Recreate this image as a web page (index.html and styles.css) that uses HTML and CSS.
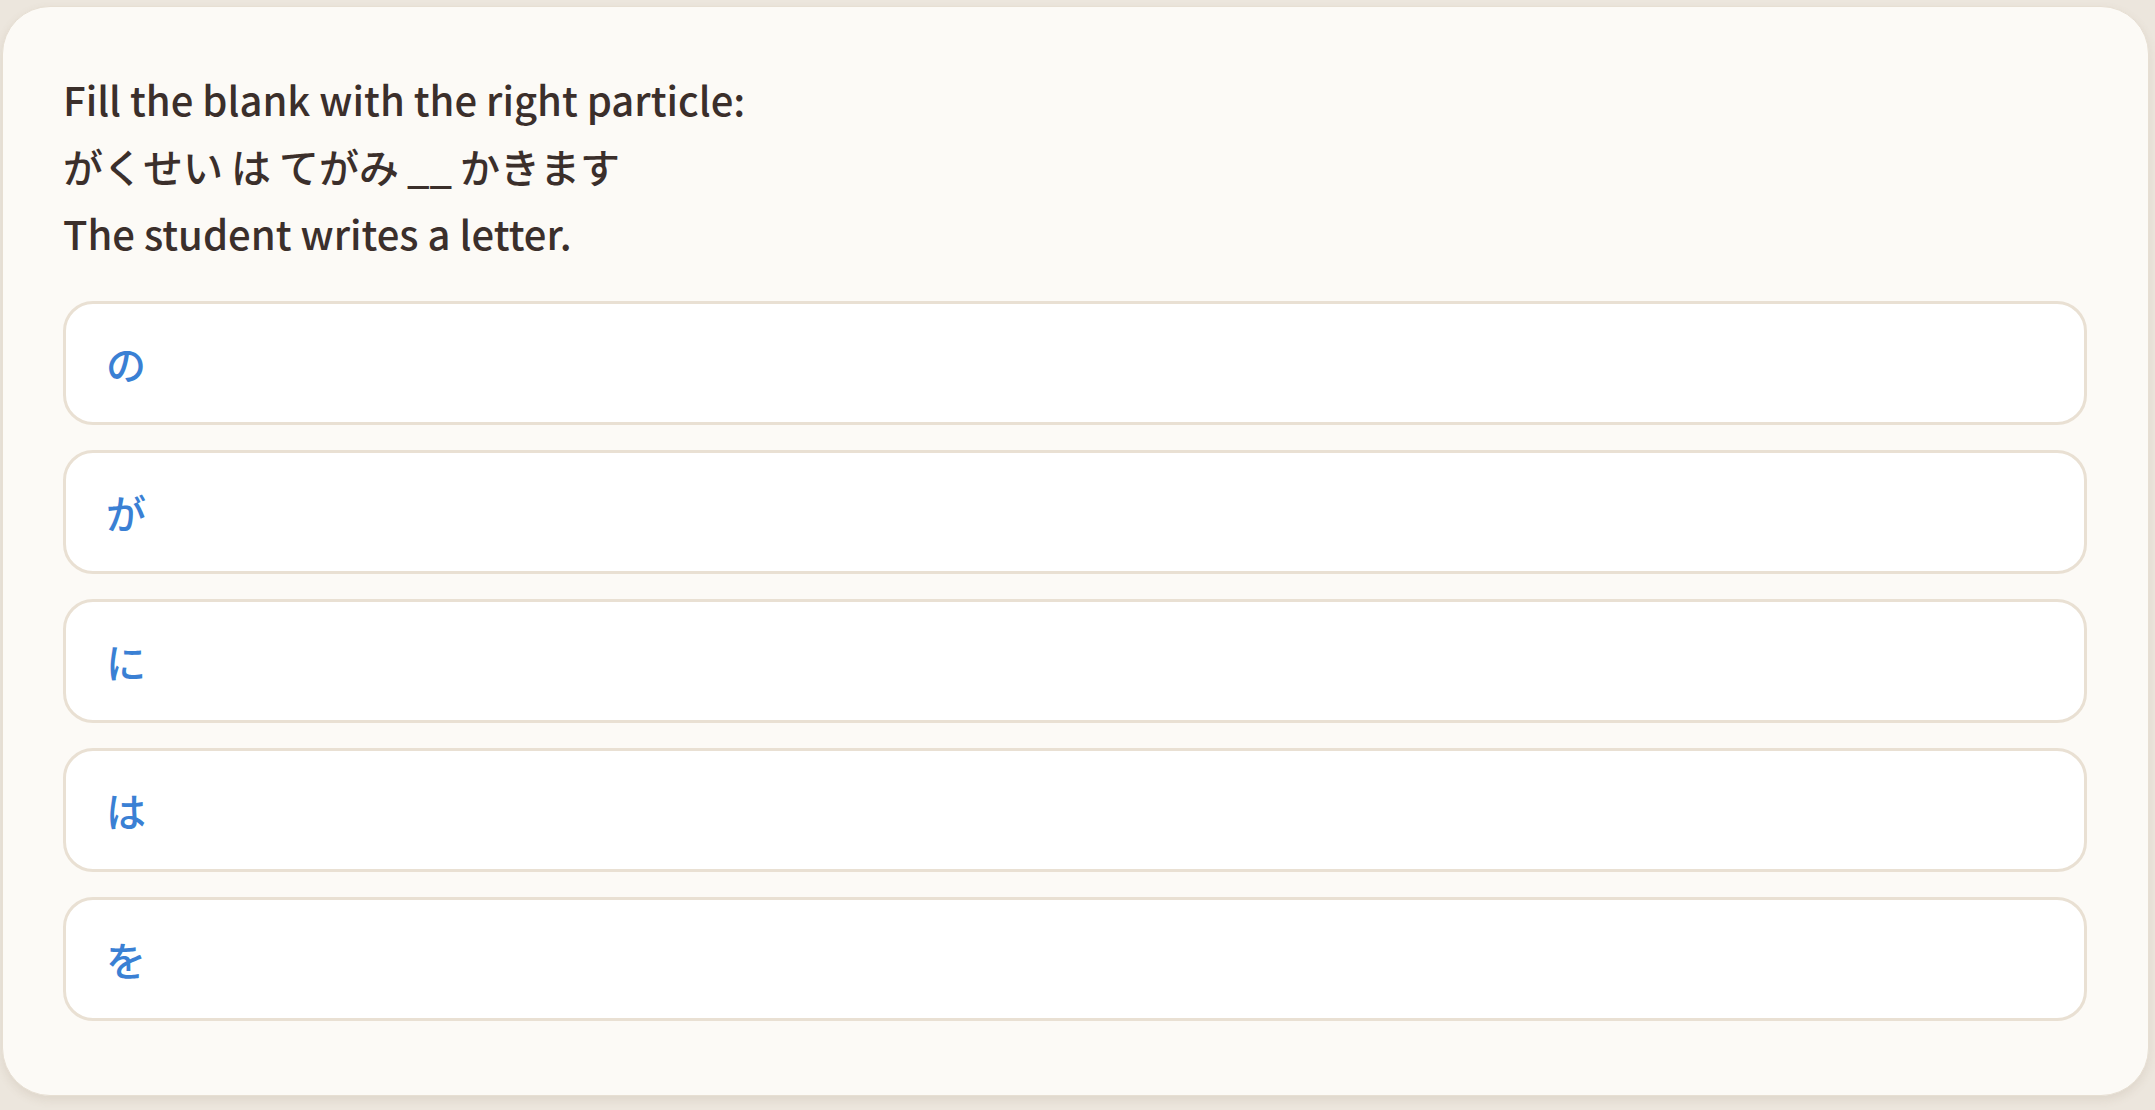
FILE: index.html
```html
<!DOCTYPE html>
<html lang="ja">
<head>
    <meta charset="UTF-8">
    <meta name="viewport" content="width=device-width, initial-scale=1.0">
    <title>Particle Quiz</title>
    <link rel="stylesheet" href="styles.css">
</head>
<body>

<div class="quiz-card">
    <div class="question">
        <div class="prompt">Fill the blank with the right particle:</div>
        <div class="sentence">がくせい は てがみ __ かきます</div>
        <div class="translation">The student writes a letter.</div>
    </div>

    <div class="options">
        <button class="option">の</button>
        <button class="option">が</button>
        <button class="option">に</button>
        <button class="option">は</button>
        <button class="option">を</button>
    </div>
</div>

</body>
</html>
```

FILE: styles.css
```css
body {
    font-family: "Noto Sans CJK JP", "Noto Sans", sans-serif;
    background-color: #ece6dd;
    color: #3b2f2b;
    margin: 0;
    padding: 6px 6px 14px 2px;
    height: 1110px;
    box-sizing: border-box;
    overflow: hidden;
}

.quiz-card {
    height: 100%;
    box-sizing: border-box;
    padding: 59px 61px 60px 60px;
    background-color: #fcfaf6;
    border: 1px solid #e7dfd3;
    border-radius: 48px;
    box-shadow: 0px 4px 10px rgba(120, 100, 70, 0.12);
}

.question {
    font-size: 40px;
    font-weight: 500;
    line-height: 67px;
    margin-bottom: 34px;
}

.sentence {
    word-spacing: -1px;
}

.options {
    display: flex;
    flex-direction: column;
    gap: 25px;
}

.option {
    display: flex;
    align-items: center;
    height: 124px;
    padding: 0 40px;
    font-family: inherit;
    font-size: 40px;
    font-weight: 500;
    color: #3a80d4;
    text-align: left;
    background: #fff;
    border: 3px solid #e9e0d3;
    border-radius: 30px;
    cursor: pointer;
    transition: background 0.2s;
}

.option:hover {
    background: #fdf9f3;
}
```
